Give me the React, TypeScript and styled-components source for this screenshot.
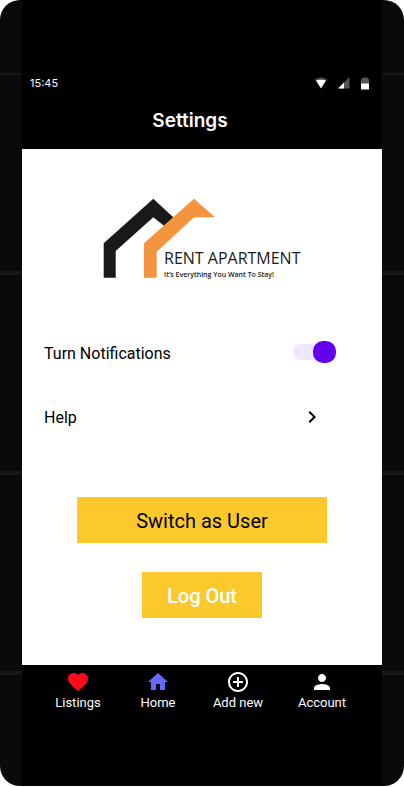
import React, { useState } from "react";
import styled, { createGlobalStyle } from "styled-components";
import { MdFavorite, MdHome, MdAddCircleOutline, MdPerson, MdChevronRight } from "react-icons/md";

const GlobalStyle = createGlobalStyle`
  * { box-sizing: border-box; }
  body { margin: 0; background: #ffffff; }
`;

const Page = styled.div`
  display: flex;
  min-height: 100vh;
  padding-bottom: 1px;
  font-family: Roboto, "Liberation Sans", sans-serif;
`;

const Backdrop = styled.div`
  flex: 1;
  display: flex;
  padding: 0 22px;
  overflow: hidden;
  border-radius: 20px;
  background:
    linear-gradient(#0a0a0a 73px, transparent 73px),
    repeating-linear-gradient(#0a0a0a 0 196px, #161616 196px 200px) 0 -125px / 100% 1200px;
`;

const Phone = styled.div`
  flex: 1;
  display: flex;
  flex-direction: column;
  background: #000000;
`;

const StatusBar = styled.div`
  display: flex;
  align-items: center;
  justify-content: space-between;
  padding: 75px 12px 0 8px;
  color: #ffffff;
  font: 400 11px/16px Inter, sans-serif;
`;

const StatusIcons = styled.div`
  display: flex;
  align-items: center;
  gap: 10px;
`;

const Header = styled.header`
  padding: 17px 0 15px;
  color: #ffffff;
  text-align: center;
`;

const Title = styled.h1`
  margin: 0;
  padding-right: 24px;
  font: 600 19px/26px Inter, sans-serif;
`;

const Content = styled.main`
  flex: 1;
  display: flex;
  flex-direction: column;
  align-items: center;
  padding: 36px 22px 47px;
  background: #ffffff;
`;

const Options = styled.div`
  align-self: stretch;
  display: flex;
  flex-direction: column;
  gap: 32px;
  margin: 47px 0 64px;
`;

const rowStyle = `
  display: flex;
  align-items: center;
  justify-content: space-between;
  width: 100%;
  height: 32px;
  color: #000000;
  font: 400 16px/32px Roboto, sans-serif;
`;

const RowLabel = styled.span`
  padding-top: 2px;
`;

const ToggleRow = styled.label`
  ${rowStyle}
  padding-right: 24px;
`;

const LinkRow = styled.a`
  ${rowStyle}
  padding-right: 36px;
  text-decoration: none;
`;

const Switch = styled.input`
  appearance: none;
  display: flex;
  align-items: center;
  width: 43px;
  height: 22px;
  margin: 0 0 2px;
  cursor: pointer;

  &::before {
    content: "";
    flex: 1;
    height: 16px;
    margin-right: -11px;
    border-radius: 8px;
    background: #efe6fd;
  }

  &::after {
    content: "";
    width: 23px;
    height: 22px;
    border-radius: 10px;
    background: #bbbbbb;
  }

  &:checked::after {
    background: #6200ee;
  }
`;

const Actions = styled.div`
  display: flex;
  flex-direction: column;
  align-items: center;
  gap: 29px;
`;

const ActionButton = styled.button<{ $light?: boolean }>`
  height: 46px;
  padding: 2px ${({ $light }) => ($light ? 25 : 59)}px 0;
  border: 0;
  background: #fcc92d;
  color: ${({ $light }) => ($light ? "#ffffff" : "#000000")};
  font: ${({ $light }) => ($light ? 500 : 400)} 20px/44px Roboto, sans-serif;
  cursor: pointer;
`;

const TabBar = styled.nav`
  display: grid;
  grid-template-columns: 10fr 10fr 10fr 11fr;
  padding: 5px 16px 74px;
`;

const Tab = styled.a<{ $tint: string }>`
  display: flex;
  flex-direction: column;
  align-items: center;
  color: #ffffff;
  font-size: 13px;
  line-height: 18px;
  text-decoration: none;

  svg {
    color: ${({ $tint }) => $tint};
  }
`;

const Logo = () => (
  <svg width="225" height="105" viewBox="0 0 225 105" role="img" aria-label="Rent Apartment">
    <path d="M13.7 92.7V58.3L63.3 13.7 83.5 32.4 74 40.7 63.3 32.3 25.7 66V92.7Z" fill="#191919" />
    <path d="M54 92.7V58.3L104 13.7 125 32.3H104L66.7 66.7V92.7Z" fill="#f4943e" />
    <g fontFamily="'Open Sans', sans-serif" fill="#191919">
      <text x="74" y="79" fontSize="16">RENT APARTMENT</text>
      <text x="74" y="92" fontSize="7" fontWeight="600">It’s Everything You Want To Stay!</text>
    </g>
  </svg>
);

const WifiIcon = () => (
  <svg width="14" height="12" viewBox="0 0 14 12" aria-hidden="true">
    <path d="M1 2.5Q7-1.5 13 2.5L11.5 5H2.5Z" fill="#555" />
    <path d="M2 3.5Q7 2 12 3.5L7 11.5Z" fill="#fff" />
  </svg>
);

const SignalIcon = () => (
  <svg width="12" height="12" viewBox="0 0 12 12" aria-hidden="true">
    <path d="M11.5 0V11.5H0Z" fill="#555" />
    <path d="M6 5.5V11.5H0Z" fill="#fff" />
  </svg>
);

const BatteryIcon = () => (
  <svg width="10" height="13" viewBox="0 0 10 13" aria-hidden="true">
    <path d="M1 7V2.5L3 .5H7L9 2.5V7Z" fill="#555" />
    <path d="M1 6.5H9V12Q9 12.5 8.5 12.5H1.5Q1 12.5 1 12Z" fill="#fff" />
  </svg>
);

const tabs = [
  { label: "Listings", Icon: MdFavorite, tint: "#ff0a18" },
  { label: "Home", Icon: MdHome, tint: "#6668ff" },
  { label: "Add new", Icon: MdAddCircleOutline, tint: "#ffffff" },
  { label: "Account", Icon: MdPerson, tint: "#ffffff" },
];

export default function App() {
  const [notify, setNotify] = useState(true);
  return (
    <Page>
      <GlobalStyle />
      <Backdrop>
        <Phone>
          <StatusBar>
            <span>15:45</span>
            <StatusIcons>
              <WifiIcon />
              <SignalIcon />
              <BatteryIcon />
            </StatusIcons>
          </StatusBar>
          <Header>
            <Title>Settings</Title>
          </Header>
          <Content>
            <Logo />
            <Options>
              <ToggleRow>
                <RowLabel>Turn Notifications</RowLabel>
                <Switch
                  type="checkbox"
                  role="switch"
                  checked={notify}
                  onChange={(e) => setNotify(e.target.checked)}
                />
              </ToggleRow>
              <LinkRow href="#help">
                <RowLabel>Help</RowLabel>
                <MdChevronRight size={24} aria-hidden="true" />
              </LinkRow>
            </Options>
            <Actions>
              <ActionButton type="button">Switch as User</ActionButton>
              <ActionButton type="button" $light>Log Out</ActionButton>
            </Actions>
          </Content>
          <TabBar>
            {tabs.map(({ label, Icon, tint }) => (
              <Tab key={label} href={"#" + label.toLowerCase().replace(" ", "-")} $tint={tint}>
                <Icon size={24} aria-hidden="true" />
                {label}
              </Tab>
            ))}
          </TabBar>
        </Phone>
      </Backdrop>
    </Page>
  );
}
